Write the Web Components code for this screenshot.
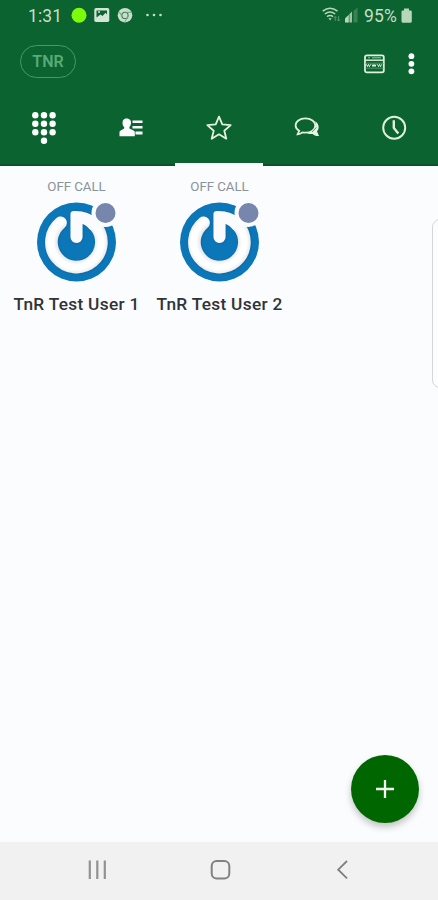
<!DOCTYPE html>
<html lang="en"><head><meta charset="utf-8"><title>Favorites</title>
<style>html,body{margin:0;height:100%}body{font-family:Roboto,"Liberation Sans",sans-serif;background:#fafcfe;overflow:hidden}</style></head>
<body><phone-screen></phone-screen>
<script>
const define = (name, html) => customElements.define(name, class extends HTMLElement {
  constructor() {
    super();
    const t = document.createElement('template');
    t.innerHTML = html;
    this.attachShadow({mode: 'open'}).append(t.content.cloneNode(true));
  }
});

define('status-bar', `<style>
:host{display:flex;align-items:center;height:32px;padding:0 26px 0 28px;color:#c6dfc9;font-size:17.5px;line-height:32px;box-sizing:border-box}
svg{display:block;flex:none}.gap{flex:1}.time{width:43px;letter-spacing:.1px}.pct{letter-spacing:.15px;width:37px;margin-left:6px;white-space:nowrap}
</style>
<span class="time">1:31</span>
<svg width="96" height="32" viewBox="71 0 96 32"><circle cx="79" cy="15.3" r="7.5" fill="#7cfc0a"/>
<rect x="94.3" y="8" width="15" height="14" rx="1.8" fill="#d3e6d5"/><path d="M96.5 17.500V10.500h10.500v4l-1.500-1.800-3 3.300-2-1.500z" fill="#0b6330"/><circle cx="99" cy="12" r="1" fill="#d3e6d5"/>
<circle cx="125" cy="15.2" r="7.3" fill="#c9dfcc"/><circle cx="125" cy="15.4" r="3.1" fill="none" stroke="#3b8054" stroke-width="1.1"/><path d="M125 12.3h6M122.3 17l-3-5.2M127.7 17l-3 5.2" stroke="#6ea17d" stroke-width="1"/>
<g fill="#c6dfc9"><circle cx="147.5" cy="15" r="1.3"/><circle cx="154" cy="15" r="1.3"/><circle cx="160.500" cy="15" r="1.3"/></g></svg>
<span class="gap"></span>
<svg width="36" height="32" viewBox="322 0 36 32" fill="none" stroke="#b7d7bb" stroke-width="1.5"><path d="M322.7 11.2q7.3-5.8 14.8 0M324.8 14q5.2-4 10.4 0M327 16.6q3-2.3 6.1 0"/><path d="M328.500 18.200h3.200l-1.600 2.300z" fill="#b7d7bb" stroke="none"/><path d="M335.2 20.8v-4M333.8 18l1.4-1.5 1.4 1.5M338.6 16v5M337.2 19.5l1.4 1.5 1.4-1.5" stroke="#5a9a6b" stroke-width="1"/>
<g stroke="none"><path d="M345 22.5v-4l3.8-3.7v7.7z" fill="#b7d7bb"/><path d="M349.4 22.5v-8.2l2.6-2.8v11z" fill="#9dc6a4"/><path d="M353.5 22.5V11l4-3.5v15z" fill="#3b8052"/></g></svg>
<span class="pct">95%</span>
<svg width="11" height="32" viewBox="0 0 11 32"><path d="M3 8.5h5v2h1.6q1.2 0 1.2 1.2v9.5q0 1.5-1.5 1.5H2q-1.5 0-1.5-1.5v-9.500q0-1.200 1.200-1.200H3z" fill="#b7d7bb"/></svg>`);

define('app-bar', `<style>
:host{display:flex;align-items:center;height:60px;padding:0 23px 0 20px;box-sizing:border-box}
.tag{box-sizing:border-box;width:56px;height:33px;margin-bottom:2px;border:1.5px solid #409e63;border-radius:17px;color:#58aa78;font:600 16px/31px Roboto,sans-serif;letter-spacing:0;text-align:center}
.gap{flex:1}svg{display:block;margin-top:3px}.more{margin-left:22px}
</style><span class="tag"><slot></slot></span><span class="gap"></span>
<svg width="21" height="22" viewBox="0 0 21 22"><rect x="1" y="2.400" width="18.800" height="17" rx="1.8" fill="none" stroke="#e2f0df" stroke-width="1.8"/><path d="M1 7.200h19" stroke="#d7ead6" stroke-width="1.500"/><path d="M4 4.800h2M8 4.800h9" stroke="#9fc7a9"/><path d="M2.500 11.300l1 2.400 1-2.400 1 2.400 1-2.400M8 11.300l1 2.400 1-2.400 1 2.400 1-2.400M13.500 11.300l1 2.400 1-2.400 1 2.400 1-2.400" fill="none" stroke="#dcecda" stroke-width="1"/><path d="M1 10.200h19M1 15.200h19" stroke="#70aa80" stroke-width=".7"/></svg>
<svg class="more" width="8" height="24" viewBox="0 0 8 24" fill="#fff"><circle cx="4.400" cy="4.200" r="2.900"/><circle cx="4.400" cy="11.800" r="2.900"/><circle cx="4.400" cy="19.300" r="2.900"/></svg>`);

define('tab-item', `<style>
:host{display:flex;box-sizing:border-box;height:74px;justify-content:center;align-items:center;border-bottom:2px solid #09522a;padding-bottom:1px}
:host([selected]){border-bottom:3px solid #fafcfe;padding-bottom:0}
</style><slot></slot>`);

define('tab-strip', `<style>
:host{display:grid;grid-template-columns:repeat(5,1fr);height:74px}svg{display:block}
</style>
<tab-item><svg width="34" height="40" viewBox="27 107 34 40" fill="#fff"><circle cx="35.3" cy="114.2" r="3.2"/><circle cx="44" cy="114.2" r="3.2"/><circle cx="52.6" cy="114.2" r="3.2"/><circle cx="35.3" cy="122.8" r="3.2"/><circle cx="44" cy="122.8" r="3.2"/><circle cx="52.6" cy="122.8" r="3.2"/><circle cx="35.3" cy="131.2" r="3.2"/><circle cx="44" cy="131.2" r="3.2"/><circle cx="52.6" cy="131.2" r="3.2"/><circle cx="44" cy="139.7" r="3.2"/></svg></tab-item>
<tab-item><svg width="34" height="40" viewBox="114.5 107.5 34 40" fill="#fff"><path d="M127 118c3.600 0 5 2.300 4.400 5.400-.3 1.500-1 2.500-1.500 3.200v1.500l4.200 2c1 .5 1.200 1 1.200 2V135.700H120V132c0-1 .3-1.500 1.200-2l3.500-1.900v-1.500c-1-1-1.500-2-1.600-3.200-.3-3.100.7-5.400 3.900-5.400z"/><path d="M133 120h10v2.600h-10zM133 125.500h10v2.600h-10zM136 131h7v3h-7z"/></svg></tab-item>
<tab-item selected><svg width="34" height="40" viewBox="202 107.5 34 40"><path d="M219 116.200l3.300 7.700 8.400.7-6.400 5.600 2 8-7.300-4.400-7.300 4.400 2-8-6.400-5.600 8.400-.7z" fill="none" stroke="#e4f2de" stroke-width="1.800" stroke-linejoin="round"/></svg></tab-item>
<tab-item><svg width="34" height="40" viewBox="289.500 107.500 34 40"><path d="M315 120.800c3.700 3 4.200 7.500 1.500 10l2 4.700c-3 .2-4.800-.5-6.200-2-3 .3-5-.2-6.700-1.200 6.400-.2 10.500-4.500 9.400-11.500z" fill="#e8f4e4"/><path d="M304.800 117.900c5.800 0 10 3 10 7.100s-4.200 7.200-10 7.200c-1 0-2-.1-2.900-.3-1.500 1.300-3 1.900-4.800 1.900l1.600-3.500c-2.300-1.300-3.600-3-3.600-5.300 0-4.100 4.100-7.100 9.700-7.100z" fill="#0b6330" stroke="#e1f0db" stroke-width="1.800"/><path d="M311.500 131.500l4.500-4.600" stroke="#5a9678" stroke-width="1"/></svg></tab-item>
<tab-item><svg width="34" height="40" viewBox="377.400 107.500 34 40" fill="none" stroke="#e1f0db"><circle cx="394.600" cy="127.200" r="11" stroke-width="2"/><path d="M394.200 119.700v7.700l4.500 5.500" stroke-width="2.400"/></svg></tab-item>`);

define('contact-card', `<style>
:host{display:flex;flex-direction:column;align-items:center}
.state{font-size:13.3px;line-height:16px;color:#8b929b;margin-top:13px;letter-spacing:-.05px;white-space:nowrap}
svg{display:block;margin-top:4px}
.name{font-weight:500;font-size:17.3px;line-height:22px;color:#323335;margin-top:10px;letter-spacing:.3px;white-space:nowrap}
</style><span class="state">OFF CALL</span>
<svg width="86" height="84" viewBox="34.500 199 86 84">
<defs><filter id="s" x="-20%" y="-20%" width="140%" height="140%"><feDropShadow dx=".5" dy=".5" stdDeviation=".9" flood-color="#074c80" flood-opacity=".5"/></filter>
<radialGradient id="r" gradientUnits="userSpaceOnUse" cx="76.500" cy="242" r="32"><stop offset=".57" stop-color="#e4e7eb"/><stop offset=".72" stop-color="#fff"/><stop offset=".86" stop-color="#fff"/><stop offset="1" stop-color="#e6e8eb"/></radialGradient></defs>
<circle cx="77" cy="242" r="39.500" fill="#0c77b8"/>
<g filter="url(#s)"><path d="M96 226A25 25 0 1 1 61 222.800" fill="none" stroke="url(#r)" stroke-width="12.600" stroke-linecap="round"/>
<path d="M71 237V214Q71 211 74.500 211Q88 210.500 98 219L104 227L91 230Q87.500 225.500 83 223.800V237A6 6 0 0 1 71 237z" fill="#fafbfc"/></g>
<circle cx="106" cy="213" r="14" fill="#fafcfe"/><circle cx="106" cy="213" r="10" fill="#7686ac"/></svg>
<span class="name"><slot></slot></span>`);

define('round-button', `<style>
:host{display:flex;width:68px;height:68px;border-radius:50%;background:#006600;align-items:center;justify-content:center;box-shadow:0 4px 7px #0000003b}svg{display:block}
</style><svg width="20" height="20" viewBox="0 0 20 20"><path d="M1 10h18M10 1v18" stroke="#f4fff4" stroke-width="2.300"/></svg>`);

define('nav-bar', `<style>
:host{display:flex;height:58px;background:#f1f1f1;justify-content:space-between;align-items:center;padding:0 86px 2px 85px;box-sizing:border-box}svg{display:block}
</style><svg width="24" height="24" viewBox="0 0 24 24" stroke="#929292" stroke-width="2.200"><path d="M4.800 2.500v18.500M12.300 2.500v18.500M19.800 2.500v18.500"/></svg>
<svg width="24" height="24" viewBox="0 0 24 24"><rect x="1.700" y="2.900" width="17.600" height="17.600" rx="5" fill="none" stroke="#818181" stroke-width="2"/></svg>
<svg width="18" height="24" viewBox="0 0 18 24"><path d="M13 3L4.200 11.700l8.800 8.700" fill="none" stroke="#7e7e7e" stroke-width="1.800"/></svg>`);

define('phone-screen', `<style>
:host{display:flex;flex-direction:column;width:438px;height:900px;overflow:hidden;background:#fafcfe}
header{background:#0b6330;height:166px}
main{flex:1;position:relative;display:grid;grid-template-columns:143px 143px;align-content:start;padding-left:5px}
.edge{position:absolute;left:432px;top:53px;width:20px;height:169px;border:1px solid #d5d7d9;border-radius:8px;box-sizing:border-box;background:#fcfdfe}
round-button{position:absolute;left:350.500px;bottom:19.500px}
</style><header><status-bar></status-bar><app-bar>TNR</app-bar><tab-strip></tab-strip></header>
<main><contact-card>TnR Test User 1</contact-card><contact-card>TnR Test User 2</contact-card><span class="edge"></span><round-button></round-button></main><nav-bar></nav-bar>`);
</script></body></html>
